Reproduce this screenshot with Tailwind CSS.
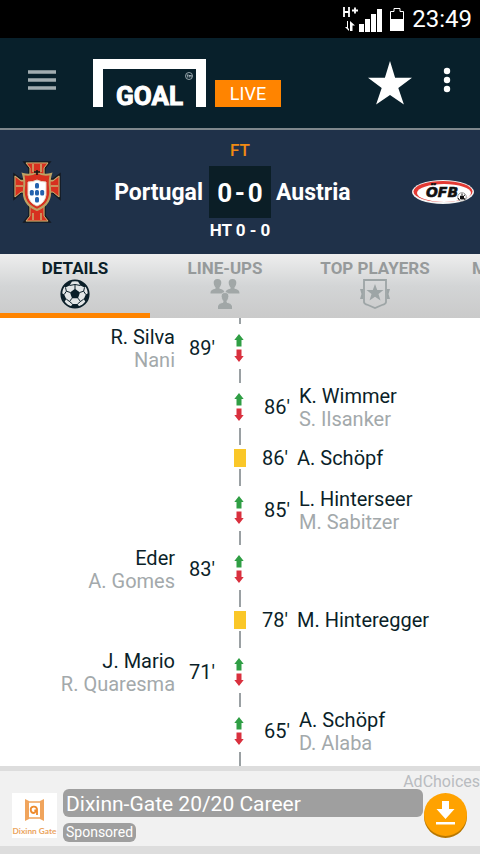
<!DOCTYPE html>
<html lang="en">
<head>
<meta charset="utf-8">
<meta name="viewport" content="width=device-width, initial-scale=1">
<title>Portugal 0-0 Austria</title>
<script src="https://cdn.jsdelivr.net/npm/@tailwindcss/browser@4"></script>
</head>
<body class="flex min-h-screen flex-col overflow-x-hidden bg-[#dddddd] font-['Roboto',sans-serif] text-[#0b1f29]">

<svg class="hidden" aria-hidden="true">
  <symbol id="swap" viewBox="0 0 12 28">
    <path d="M5 0 L9.700 6 H7.500 V12.500 H2.500 V6 H.3Z" fill="#2f9e44"/>
    <path d="M5 28 L9.700 22 H7.500 V15.500 H2.500 V22 H.3Z" fill="#d9303e"/>
  </symbol>
</svg>

<div class="flex h-[38px] items-center justify-end gap-2 bg-black pr-2 text-white">
  <svg class="h-[26px] w-[40px]" viewBox="0 0 40 26" fill="#fff" aria-label="H+ signal">
    <path d="M2 1V11M7 1V11M2 6H7M10 4.500H16M13 1.500V7.500" stroke="#fff" stroke-width="1.800" fill="none"/>
    <path d="M6 15V22.500H7V25L3 21H5V15ZM8 25V15L13 19.500H10.500V25Z"/>
    <path d="M17 18h5v8h-5zM23 13h5v13h-5zM29 8h5v18h-5zM35 3h5v23h-5z"/>
  </svg>
  <svg class="h-[24px] w-[14px]" viewBox="0 0 14 24" fill="#fff" aria-label="Battery">
    <path d="M.5 23.500V4.500H4V1.500H10V4.500H13.500V23.500Z" fill="none" stroke="#fff"/>
    <path d="M0 12h14v12H0z"/>
  </svg>
  <span class="text-2xl">23:49</span>
</div>

<header class="flex h-[92px] items-center border-b-2 border-[#7f888d] bg-[#08202b] pr-[29px] pl-[28px]">
  <button aria-label="Menu" class="mb-[6px]">
    <svg class="h-5 w-7" viewBox="0 0 28 20"><path d="M0 2H28M0 10H28M0 18H28" stroke="#a3adb1" stroke-width="3.400"/></svg>
  </button>
  <a href="#" class="ml-[37px] flex items-end" aria-label="Goal Live">
    <span class="relative flex h-[48px] w-[113px] items-end justify-center border-x-10 border-t-10 border-white text-[26px] leading-[22px] font-bold text-white [-webkit-text-stroke:1px_white]">GOAL
      <svg class="absolute top-[3px] right-[3px] h-2 w-2" viewBox="0 0 8 8" fill="none" stroke="#b9c4c9" stroke-width=".8"><circle cx="4" cy="4" r="3.500"/><path d="M1.800 3H3.600M2.700 3V5.500M4.300 5.500V3L5.200 4.200L6.100 3V5.500"/></svg>
    </span>
    <span class="ml-[9px] flex h-[27px] w-[66px] items-center justify-center bg-[#ff8400] text-[18px] text-white">LIVE</span>
  </a>
  <button aria-label="Favourite" class="ml-auto">
    <svg class="h-[44px] w-[44px]" viewBox="0 0 44 44" fill="#fff"><path d="M22 0L27.100 16.700H44L30.300 27L35.900 43.500L22 34L8.100 43.500L13.700 27L0 16.700H16.900Z"/></svg>
  </button>
  <button aria-label="More options" class="ml-[31px] mb-[6px]">
    <svg class="h-[26px] w-2" viewBox="0 0 8 26" fill="#fff"><circle cx="4" cy="4" r="3.200"/><circle cx="4" cy="13" r="3.200"/><circle cx="4" cy="22" r="3.200"/></svg>
  </button>
</header>

<section class="grid h-[124px] grid-cols-[1fr_62px_1fr] grid-rows-[36px_52px_24px] bg-[#1f3149] font-medium text-white">
  <p class="col-span-3 pt-[9px] text-center text-[17px] leading-[22px] text-[#f08a12]">FT</p>
  <div class="flex items-center justify-between pr-[6px] pl-[13px]">
    <svg class="h-[62px] w-[48px]" viewBox="0 0 48 62" role="img" aria-label="Portugal">
      <g stroke="#15181f" stroke-width="1.500"><path d="M11 1H37L32 7V55L37 61H11L16 55V7Z" fill="#b49a62"/><path d="M1 13L8 18H40L47 13V38L40 32H8L1 38Z" fill="#b49a62"/></g>
      <path d="M13 2H35L31 7V55L35 60H13L17 55V7Z" fill="#d7301f" stroke="#c7ae70"/>
      <path d="M2 15L8 20H40L46 15V36L40 31H8L2 36Z" fill="#d7301f" stroke="#c7ae70"/>
      <path d="M20 3V11M28 3V11M20 52V59M28 52V59M3 25H10M38 25H45" stroke="#c7ae70" stroke-width="1.500"/>
      <path d="M24 11Q30 15 38 13Q36 19 37 27Q39 43 24 49Q9 43 11 27Q12 19 10 13Q18 15 24 11Z" fill="#d7301f" stroke="#bda264" stroke-width="2"/>
      <path d="M15 21Q20 21 24 19Q28 21 33 21V34Q32 42 24 45Q16 42 15 34Z" fill="#fff" stroke="#e7d8c4"/>
      <g fill="#2462ad"><rect x="22" y="22" width="4" height="5.500" rx="1.500"/><rect x="16.800" y="29" width="4" height="5.500" rx="1.500"/><rect x="22" y="29" width="4" height="5.500" rx="1.500"/><rect x="27.200" y="29" width="4" height="5.500" rx="1.500"/><rect x="22" y="36" width="4" height="5.500" rx="1.500"/></g>
      <path d="M24 9V14M21 11H27" stroke="#111" stroke-width="1.500"/>
    </svg>
    <span class="pt-[3px] text-[23px] font-bold">Portugal</span>
  </div>
  <div class="flex items-center justify-center bg-[#0b1e26] pt-[3px] text-[26px] font-bold">0&hairsp;-&hairsp;0</div>
  <div class="flex items-center justify-between pr-[6px] pl-[5px]">
    <span class="pt-[3px] text-[23px] font-bold">Austria</span>
    <svg class="h-[24px] w-[62px]" viewBox="0 0 62 24" role="img" aria-label="ÖFB">
      <ellipse cx="31" cy="12" rx="31" ry="12" fill="#f4f4f4"/>
      <ellipse cx="31" cy="11.500" rx="29.500" ry="10.500" fill="#e33a34"/>
      <ellipse cx="32" cy="13" rx="27" ry="9" fill="#fff"/>
      <text x="30" y="17" text-anchor="middle" font-family="DejaVu Sans" font-size="14" font-weight="bold" font-style="italic" fill="#111" stroke="#111" stroke-width=".6">ÖFB</text>
      <circle cx="50" cy="17" r="4.300" fill="#fff" stroke="#555" stroke-width=".6"/><path d="M48.500 16h3v3h-3zM46 18l1.500 2M53 18l-1 2M50 13.500v1.500M53 15l-1 .5" fill="#111" stroke="#111"/>
    </svg>
  </div>
  <p class="col-span-3 text-center text-[17px] leading-[24px] font-bold">HT 0 - 0</p>
</section>

<nav class="flex h-[64px] shrink-0 overflow-hidden bg-linear-to-b from-[#eeeeee] via-[#d3d5d6] to-[#cacaca] text-[17px] leading-5 font-bold text-[#969a9b]">
  <a href="#" aria-current="page" class="flex w-[150px] shrink-0 flex-col items-center border-b-5 border-[#ff8400] pt-[4px] text-[#0b1f29]">DETAILS
    <svg class="mt-px h-[30px] w-[30px]" viewBox="0 0 30 30"><circle cx="15" cy="15" r="13.800" fill="#e3e6e7"/>
      <path d="M15 9.800L20 13.400L18 19.200H12L10 13.400Z M20.500 6.500L24.500 8.500L26.500 7L20.500 2L18 2.500Z M9.500 6.500L5.500 8.500L3.500 7L9.500 2L12 2.500Z M25.800 15.500L23.800 20L25.500 23L28.500 18V14Z M4.200 15.500L6.200 20L4.500 23L1.500 18V14Z M12.500 25H17.500L19.500 28L15 29L10.500 28Z" fill="#0b1f29"/>
      <path d="M15 10V5.500M20 13.400L23.600 12.200M18 19.200L20.500 22.500M12 19.200L9.500 22.500M10 13.400L6.400 12.200M9.500 6.500L15 5.500L20.500 6.500M24.500 8.500L23.600 12.200L25.800 15.500M23.800 20L20.500 22.500L17.500 25M12.500 25L9.500 22.500L6.200 20M4.200 15.500L6.400 12.200L5.500 8.500" fill="none" stroke="#0b1f29" stroke-width="1"/>
      <circle cx="15" cy="15" r="13.700" fill="none" stroke="#0b1f29" stroke-width="1.800"/></svg>
  </a>
  <a href="#" class="flex w-[150px] shrink-0 flex-col items-center pt-[4px]">LINE-UPS
    <svg class="mt-px h-[30px] w-[30px]" viewBox="0 0 30 30" fill="#a1a7a7"><defs><path id="person" d="M7.500 0C10.500 0 11.500 1.800 11.300 4C11 6.500 10.200 7.700 9.500 8.300V9.800C12.500 10.600 14.500 11 14.500 14.500H.5C.5 11 2.500 10.600 5.500 9.800V8.300C4.800 7.700 4 6.500 3.700 4C3.500 1.800 4.500 0 7.500 0Z"/></defs><use href="#person"/><use href="#person" x="15"/><use href="#person" x="7.500" y="13.500" stroke="#d3d5d6" stroke-width=".8"/><path d="M8 26.500h14V30H8z"/></svg>
  </a>
  <a href="#" class="flex w-[150px] shrink-0 flex-col items-center pt-[4px]">TOP PLAYERS
    <svg class="mt-px h-[30px] w-[30px]" viewBox="0 0 30 30" fill="#9da5a6"><path d="M4 1H26V23Q26 25 22 26L15 29L8 26Q4 25 4 23Z" fill="none" stroke="#9da5a6" stroke-width="1.800"/><path d="M15 5L17.200 11H23.500L18.500 15L20.500 21.500L15 17.700L9.500 21.500L11.500 15L6.500 11H12.800Z"/><path d="M3 10H0L1.500 15L0 20H3ZM27 10H30L28.500 15L30 20H27Z"/></svg>
  </a>
  <a href="#" class="shrink-0 pt-[4px] pl-[22px]">MATCH</a>
</nav>

<main class="flex shrink-0 flex-col bg-white text-[20px] leading-[23px]">
  <div class="mx-auto h-[6px] w-[2px] bg-[#9aa0a3]"></div>

  <div class="grid h-[45px] grid-cols-[1fr_28px_1fr] items-center">
    <div class="flex items-center justify-end gap-[14px] pr-[11px]"><p class="pt-[2px] text-right">R. Silva<br><span class="text-[#a3a9ab]">Nani</span></p><span>89'</span></div>
    <svg class="mx-auto h-7 w-3" aria-label="Substitution"><use href="#swap"/></svg>
  </div>
  <div class="mx-auto h-[14px] w-[2px] bg-[#9aa0a3]"></div>

  <div class="grid h-[45px] grid-cols-[1fr_28px_1fr] items-center">
    <svg class="col-start-2 mx-auto h-7 w-3" aria-label="Substitution"><use href="#swap"/></svg>
    <div class="flex items-center gap-[9px] pl-[10px]"><span>86'</span><p class="pt-[2px]">K. Wimmer<br><span class="text-[#a3a9ab]">S. Ilsanker</span></p></div>
  </div>
  <div class="mx-auto h-[17px] w-[2px] bg-[#9aa0a3]"></div>

  <div class="grid h-[24px] grid-cols-[1fr_28px_1fr] items-center">
    <div class="col-start-2 mx-auto h-[18px] w-[12px] bg-[#fac728]" role="img" aria-label="Yellow card"></div>
    <div class="flex items-center gap-[9px] pt-[2px] pl-[8px]"><span>86'</span><p>A. Schöpf</p></div>
  </div>
  <div class="mx-auto h-[17px] w-[2px] bg-[#9aa0a3]"></div>

  <div class="grid h-[45px] grid-cols-[1fr_28px_1fr] items-center">
    <svg class="col-start-2 mx-auto h-7 w-3" aria-label="Substitution"><use href="#swap"/></svg>
    <div class="flex items-center gap-[9px] pl-[10px]"><span>85'</span><p class="pt-[2px]">L. Hinterseer<br><span class="text-[#a3a9ab]">M. Sabitzer</span></p></div>
  </div>
  <div class="mx-auto h-[14px] w-[2px] bg-[#9aa0a3]"></div>

  <div class="grid h-[45px] grid-cols-[1fr_28px_1fr] items-center">
    <div class="flex items-center justify-end gap-[14px] pr-[11px]"><p class="pt-[2px] text-right">Eder<br><span class="text-[#a3a9ab]">A. Gomes</span></p><span>83'</span></div>
    <svg class="mx-auto h-7 w-3" aria-label="Substitution"><use href="#swap"/></svg>
  </div>
  <div class="mx-auto h-[17px] w-[2px] bg-[#9aa0a3]"></div>

  <div class="grid h-[24px] grid-cols-[1fr_28px_1fr] items-center">
    <div class="col-start-2 mx-auto h-[18px] w-[12px] bg-[#fac728]" role="img" aria-label="Yellow card"></div>
    <div class="flex items-center gap-[9px] pt-[2px] pl-[8px]"><span>78'</span><p>M. Hinteregger</p></div>
  </div>
  <div class="mx-auto h-[17px] w-[2px] bg-[#9aa0a3]"></div>

  <div class="grid h-[45px] grid-cols-[1fr_28px_1fr] items-center">
    <div class="flex items-center justify-end gap-[14px] pr-[11px]"><p class="pt-[2px] text-right">J. Mario<br><span class="text-[#a3a9ab]">R. Quaresma</span></p><span>71'</span></div>
    <svg class="mx-auto h-7 w-3" aria-label="Substitution"><use href="#swap"/></svg>
  </div>
  <div class="mx-auto h-[14px] w-[2px] bg-[#9aa0a3]"></div>

  <div class="grid h-[45px] grid-cols-[1fr_28px_1fr] items-center">
    <svg class="col-start-2 mx-auto h-7 w-3" aria-label="Substitution"><use href="#swap"/></svg>
    <div class="flex items-center gap-[9px] pl-[10px]"><span>65'</span><p class="pt-[2px]">A. Schöpf<br><span class="text-[#a3a9ab]">D. Alaba</span></p></div>
  </div>
  <div class="mx-auto h-[14px] w-[2px] bg-[#9aa0a3]"></div>
</main>

<aside class="relative flex h-[85px] shrink-0 items-start gap-[6px] border-t-5 border-b-5 border-[#dddddd] bg-[#f1f1f1] pt-[18px] pr-[13px] pl-3">
  <a href="#" class="absolute top-[2px] right-0 text-[16px] leading-[18px] text-[#b9bcc0]">AdChoices</a>
  <svg class="mt-[4px] h-[45px] w-[45px] shrink-0 bg-white" viewBox="0 0 45 45" role="img" aria-label="Dixinn Gate">
    <path d="M13 6L17 8V26L13 28ZM32 6L28 8V26L32 28Z" fill="#f0a45c"/><path d="M16 9H29M16 25H29" stroke="#f0a45c" stroke-width="1.500"/>
    <path d="M25 22V16A3.200 3.200 0 1 0 22 20Q24 19.500 23 16.500" fill="none" stroke="#ee8a2c" stroke-width="1.800"/>
    <text x="22.500" y="41" text-anchor="middle" font-family="Lato" font-size="8.300" font-weight="bold" fill="#eba45e">Dixinn Gate</text>
  </svg>
  <div class="flex grow flex-col items-start gap-[6px] text-white">
    <a href="#" class="w-full rounded-md bg-[#9f9f9f] px-[3px] pt-[2px] text-[21px] leading-[26px]">Dixinn-Gate 20/20 Career</a>
    <span class="rounded-md bg-[#9f9f9f] px-[3px] text-[14px] leading-[19px]">Sponsored</span>
  </div>
  <button aria-label="Download" class="-ml-[5px] mt-[4px] shrink-0">
    <svg class="h-[45px] w-[43px]" viewBox="0 0 43 45"><circle cx="21.500" cy="23.500" r="21.500" fill="#b87700"/><circle cx="21.500" cy="21.500" r="21.500" fill="#ffa200"/><path d="M18 8H25V16H30.500L21.500 26L12.500 16H18ZM12 29H31V31.500H12Z" fill="#fff"/></svg>
  </button>
</aside>
</body>
</html>
